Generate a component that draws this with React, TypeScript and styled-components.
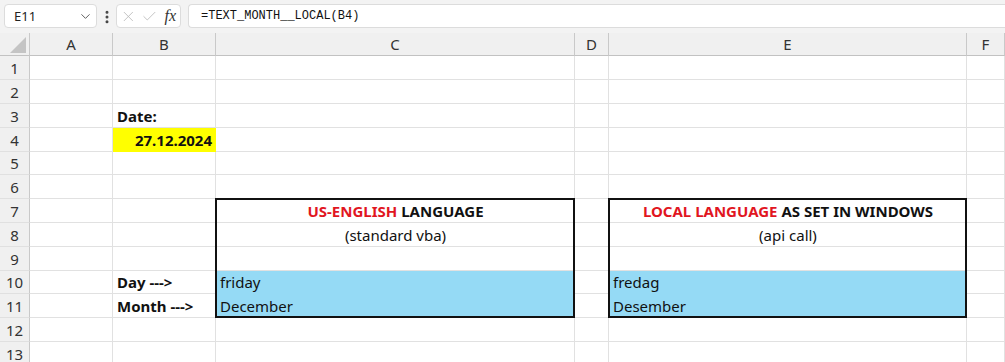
import React from 'react';
import styled, { createGlobalStyle } from 'styled-components';
import { ChevronDown, EllipsisVertical, X, Check } from 'lucide-react';

const GlobalStyle = createGlobalStyle`
  body {
    margin: 0;
    background: #ffffff;
    font-family: 'Noto Sans', 'Open Sans', sans-serif;
    overflow: hidden;
  }
`;

const Red = styled.span`
  color: #e1161f;
`;

const columns = ['A', 'B', 'C', 'D', 'E', 'F'];
const rowHeights = [24, 24, 24, 24, 23, 24, 24, 24, 24, 23, 24, 24, 24];

type CellData = {
  text: React.ReactNode;
  bold?: boolean;
  align?: 'left' | 'center' | 'right';
  fill?: string;
};

const BLUE = '#95daf5';

/** Data **/
const cellData: Record<string, CellData> = {
  B3: { text: 'Date:', bold: true },
  B4: { text: '27.12.2024', bold: true, align: 'right', fill: '#ffff00' },
  B10: { text: 'Day --->', bold: true },
  B11: { text: 'Month --->', bold: true },
  C7: {
    text: (
      <>
        <Red>US-ENGLISH</Red> LANGUAGE
      </>
    ),
    bold: true,
    align: 'center',
  },
  C8: { text: '(standard vba)', align: 'center' },
  C10: { text: 'friday', fill: BLUE },
  C11: { text: 'December', fill: BLUE },
  E7: {
    text: (
      <>
        <Red>LOCAL LANGUAGE</Red> AS SET IN WINDOWS
      </>
    ),
    bold: true,
    align: 'center',
  },
  E8: { text: '(api call)', align: 'center' },
  E10: { text: 'fredag', fill: BLUE },
  E11: { text: 'Desember', fill: BLUE },
};

const frames = [
  { col: 'C', from: 7, to: 11 },
  { col: 'E', from: 7, to: 11 },
];

export default function App() {
  return (
    <>
      <GlobalStyle />
      <StyledApp>
        <FormulaBar />
        <Sheet>
          <Corner>
            <svg width="16" height="16" viewBox="0 0 16 16">
              <polygon points="16,0 16,16 0,16" fill="#c4c4c4" />
            </svg>
          </Corner>
          {columns.map((c) => (
            <ColHeader key={c}>{c}</ColHeader>
          ))}
          {rowHeights.map((_, i) => {
            const row = i + 1;
            return (
              <React.Fragment key={row}>
                <RowHeader $row={row}>{row}</RowHeader>
                {columns.map((c, ci) => {
                  const data = cellData[`${c}${row}`];
                  return (
                    <Cell
                      key={c}
                      $row={row}
                      $col={ci + 2}
                      $bold={data?.bold}
                      $align={data?.align}
                      $fill={data?.fill}
                    >
                      {data && <span>{data.text}</span>}
                    </Cell>
                  );
                })}
              </React.Fragment>
            );
          })}
          {frames.map((f) => (
            <Frame
              key={f.col}
              $col={columns.indexOf(f.col) + 2}
              $from={f.from}
              $to={f.to}
            />
          ))}
        </Sheet>
      </StyledApp>
    </>
  );
}

function FormulaBar() {
  return (
    <StyledToolbar>
      <NameBox>
        <span>E11</span>
        <ChevronDown size={15} strokeWidth={1.5} color="#555" />
      </NameBox>
      <MoreButton>
        <EllipsisVertical size={16} strokeWidth={2.5} color="#444" />
      </MoreButton>
      <FnBox>
        <X size={17} strokeWidth={1.2} color="#b8b8b8" />
        <Check size={17} strokeWidth={1.2} color="#b8b8b8" />
        <Fx>fx</Fx>
      </FnBox>
      <FormulaInput>=TEXT_MONTH__LOCAL(B4)</FormulaInput>
    </StyledToolbar>
  );
}

const StyledApp = styled.div`
  width: 1005px;
  height: 362px;
  overflow: hidden;
  background: #ffffff;
`;

const StyledToolbar = styled.div`
  display: flex;
  align-items: center;
  height: 33px;
  padding: 0 0 0 4px;
  box-sizing: border-box;
  background: #f3f3f3;
`;

const BoxBase = styled.div`
  height: 24px;
  box-sizing: border-box;
  background: #ffffff;
  border: 1px solid #dcdcdc;
  border-radius: 4px;
  display: flex;
  align-items: center;
  margin-top: -1px;
`;

const NameBox = styled(BoxBase)`
  width: 93px;
  justify-content: space-between;
  padding: 0 3px 0 9px;
  font-size: 13px;
  color: #222;
`;

const MoreButton = styled.div`
  width: 18px;
  display: flex;
  justify-content: center;
  margin: 0 0 0 1px;
`;

const FnBox = styled(BoxBase)`
  width: 65px;
  padding: 0 4px 0 3px;
  gap: 4px;
`;

const Fx = styled.span`
  font-family: 'Liberation Serif', 'DejaVu Serif', serif;
  font-style: italic;
  font-size: 16px;
  color: #333;
  margin-left: 3px;
`;

const FormulaInput = styled(BoxBase)`
  flex: 1;
  margin-left: 7px;
  border-right: none;
  border-radius: 4px 0 0 4px;
  padding-left: 12px;
  font-family: 'Liberation Mono', 'DejaVu Sans Mono', monospace;
  font-size: 12px;
  color: #111;
`;

const Sheet = styled.div`
  display: grid;
  grid-template-columns: 30px 83px 103px 359px 34px 358px 1fr;
  grid-template-rows: 23px ${rowHeights.map((h) => `${h}px`).join(' ')};
  font-size: 15px;
  color: #111;
`;

const Corner = styled.div`
  grid-row: 1;
  grid-column: 1;
  background: #f0f0f0;
  border-right: 1px solid #c9c9c9;
  border-bottom: 1px solid #c2c2c2;
  display: flex;
  align-items: flex-end;
  justify-content: flex-end;
  padding: 0 3px 2px 0;
`;

const ColHeader = styled.div`
  grid-row: 1;
  background: #f0f0f0;
  border-right: 1px solid #c9c9c9;
  border-bottom: 1px solid #c2c2c2;
  display: flex;
  align-items: center;
  justify-content: center;
  font-size: 15px;
  color: #333;
`;

const RowHeader = styled.div<{ $row: number }>`
  grid-row: ${(p) => p.$row + 1};
  grid-column: 1;
  background: #f0f0f0;
  border-right: 1px solid #c9c9c9;
  border-bottom: 1px solid #e0e0e0;
  display: flex;
  align-items: center;
  justify-content: center;
  font-size: 15px;
  color: #333;
`;

const Cell = styled.div<{
  $row: number;
  $col: number;
  $bold?: boolean;
  $align?: 'left' | 'center' | 'right';
  $fill?: string;
}>`
  grid-row: ${(p) => p.$row + 1};
  grid-column: ${(p) => p.$col};
  display: flex;
  align-items: center;
  justify-content: ${(p) =>
    p.$align === 'center' ? 'center' : p.$align === 'right' ? 'flex-end' : 'flex-start'};
  padding: 0 3px 0 4px;
  box-sizing: border-box;
  white-space: nowrap;
  overflow: hidden;
  font-weight: ${(p) => (p.$bold ? 700 : 400)};
  background: ${(p) => p.$fill || 'transparent'};
  border-right: 1px solid ${(p) => p.$fill || '#e1e1e1'};
  border-bottom: 1px solid ${(p) => p.$fill || '#e1e1e1'};
`;

const Frame = styled.div<{ $col: number; $from: number; $to: number }>`
  grid-column: ${(p) => p.$col};
  grid-row: ${(p) => p.$from + 1} / ${(p) => p.$to + 2};
  border: 2px solid #111;
  margin: -1px 0 0 -1px;
  pointer-events: none;
`;
